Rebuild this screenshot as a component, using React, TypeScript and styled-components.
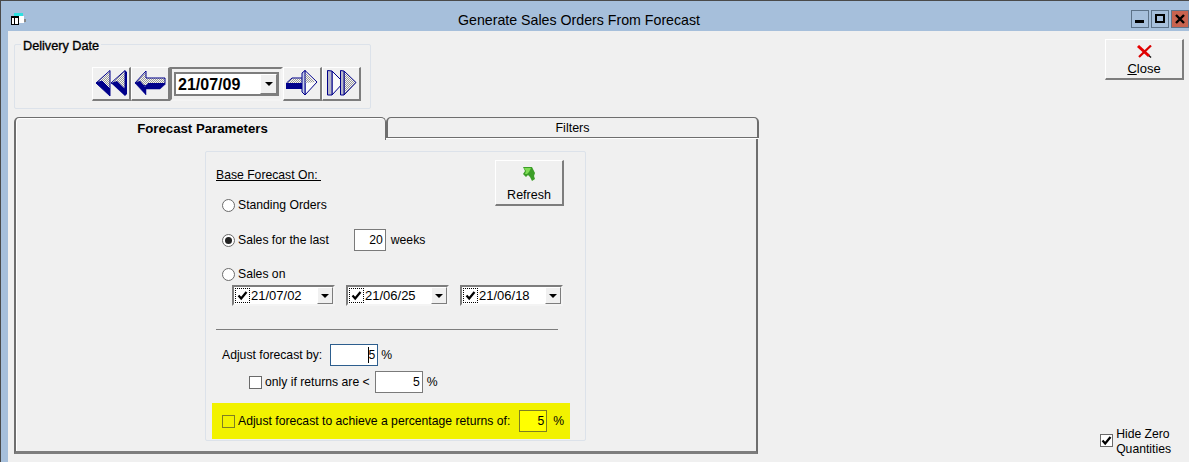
import React from 'react';
import styled, { createGlobalStyle } from 'styled-components';

const Global = createGlobalStyle`
	html, body {
		margin: 0;
		padding: 0;
		background: #f0f0f0;
	}
	body {
		font-family: 'Liberation Sans', Arial, sans-serif;
		font-size: 12.2px;
		color: #000;
	}
`;

const Win = styled.div`
	width: 1189px;
	height: 462px;
	box-sizing: border-box;
	display: flex;
	flex-direction: column;
	background: #a6bfdb;
	border-top: 1px solid #4a4a4a;
	border-left: 1px solid #4a4a4a;
	overflow: hidden;
`;

const TitleBar = styled.div`
	height: 30px;
	flex: none;
	display: flex;
	align-items: flex-start;
	padding: 12px 0 0 10px;
	box-sizing: border-box;
	position: relative;
`;

const Title = styled.div`
	position: absolute;
	left: 0;
	right: 32px;
	top: 11px;
	text-align: center;
	font-size: 14.2px;
	line-height: 16px;
`;

const CtlGroup = styled.div`
	position: absolute;
	right: 0;
	top: 9px;
	display: flex;
	gap: 2px;
`;

const Ctl = styled.div<{ $close?: boolean }>`
	width: 16px;
	height: 16px;
	border: 1px solid #5d7288;
	background: ${(p) => (p.$close ? '#c8634f' : '#a6bfdb')};
	display: flex;
	align-items: center;
	justify-content: center;
`;

const Client = styled.div`
	flex: 1;
	margin-left: 7px;
	background: #f0f0f0;
	display: flex;
	justify-content: space-between;
`;

const LeftCol = styled.div`
	width: 750px;
	padding: 13px 0 0 6px;
	display: flex;
	flex-direction: column;
	align-items: flex-start;
`;

const RightCol = styled.div`
	width: 90px;
	display: flex;
	flex-direction: column;
	align-items: flex-end;
	justify-content: space-between;
	padding: 8px 5px 5px 0;
	box-sizing: border-box;
`;

const DeliveryGroup = styled.div`
	width: 357px;
	height: 65px;
	box-sizing: border-box;
	padding: 22px 0 0 77px;
	border: 1px solid #dce2ea;
	border-radius: 2px;
	display: flex;
	align-items: flex-start;
	position: relative;
`;

const GroupLabel = styled.div`
	position: absolute;
	left: 6px;
	top: -6px;
	padding: 0 2px;
	background: #f0f0f0;
	font-size: 12.7px;
	-webkit-text-stroke: 0.35px #000;
	line-height: 14px;
`;

const NavRow = styled.div`
	display: flex;
	align-items: center;
`;

const RaisedBtn = styled.div`
	box-sizing: border-box;
	display: flex;
	flex-direction: column;
	align-items: center;
	background: #f0f0f0;
	border-top: 1px solid #fff;
	border-left: 1px solid #fff;
	border-right: 2px solid #7d7d7d;
	border-bottom: 2px solid #7d7d7d;
`;

const NavBtn = styled(RaisedBtn)`
	width: 39px;
	height: 34px;
	justify-content: center;
`;

const DateFrame = styled.div`
	width: 113px;
	height: 34px;
	box-sizing: border-box;
	border: 2px solid #7d7d7d;
	border-right-color: #f4f4f4;
	border-bottom-color: #f4f4f4;
	display: flex;
	align-items: center;
	justify-content: center;
`;

const DateCombo = styled.div`
	width: 105px;
	height: 24px;
	box-sizing: border-box;
	background: #fff;
	border: 2px solid #7d7d7d;
	display: flex;
	align-items: center;
	justify-content: space-between;
	font-size: 16px;
	font-weight: bold;
	padding: 1px 0 0 2px;
`;

const DropBtn = styled.div<{ $w: number; $h: number }>`
	width: ${(p) => p.$w}px;
	height: ${(p) => p.$h}px;
	box-sizing: border-box;
	flex: none;
	background: #f0f0f0;
	border-top: 1px solid #fff;
	border-left: 1px solid #fff;
	border-right: 1px solid #7d7d7d;
	border-bottom: 1px solid #7d7d7d;
	display: flex;
	align-items: center;
	justify-content: center;
	&::after {
		content: '';
		border-left: 4px solid transparent;
		border-right: 4px solid transparent;
		border-top: 4px solid #000;
	}
`;

const ComboDrop = styled(DropBtn)`
	align-self: flex-start;
	margin-top: -1px;
`;

const TabStrip = styled.div`
	display: flex;
	height: 23px;
	margin-top: 8px;
	align-items: flex-start;
	position: relative;
	z-index: 1;
`;

const ActiveTab = styled.div`
	box-sizing: border-box;
	width: 372px;
	height: 23px;
	border: 2px solid #6e6e6e;
	border-top-width: 1px;
	border-right-width: 1px;
	border-bottom: none;
	border-radius: 5px 5px 0 0;
	background: #f0f0f0;
	box-shadow: inset 1px 1px 0 #fff;
	text-align: center;
	line-height: 18px;
	padding: 2px 0 0 4px;
	font-weight: bold;
	font-size: 13.2px;
`;

const Tab = styled.div`
	box-sizing: border-box;
	width: 373px;
	height: 21px;
	border: 1px solid #6e6e6e;
	border-left-width: 2px;
	border-right-width: 2px;
	border-radius: 5px 5px 0 0;
	background: #f0f0f0;
	box-shadow: 0 1px 0 #fff;
	text-align: center;
	line-height: 18px;
	padding-top: 1px;
	font-size: 12.5px;
`;

const TabPanel = styled.div`
	width: 744px;
	height: 317px;
	box-sizing: border-box;
	margin-top: -3px;
	border-left: 2px solid #6e6e6e;
	border-right: 2px solid #6e6e6e;
	border-bottom: 3px solid #7d7d7d;
	box-shadow: inset 1px 0 0 #fff;
	padding: 14px 0 0 189px;
`;

const ParamBox = styled.div`
	width: 381px;
	height: 290px;
	box-sizing: border-box;
	border: 1px solid #dce2ea;
	border-radius: 2px;
	display: flex;
	flex-direction: column;
	position: relative;
`;

const BaseLabel = styled.div`
	position: absolute;
	left: 10px;
	top: 16px;
	text-decoration: underline;
	line-height: 15px;
`;

const RefreshBtn = styled(RaisedBtn)`
	position: absolute;
	left: 289px;
	top: 8px;
	width: 69px;
	height: 46px;
	padding-top: 5px;
	gap: 7px;
	line-height: 14px;
	font-size: 12.5px;
`;

const RadioList = styled.div`
	padding: 44px 0 0 16px;
	display: flex;
	flex-direction: column;
`;

const Row = styled.div<{ $h?: number; $mt?: number }>`
	display: flex;
	align-items: center;
	height: ${(p) => p.$h ?? 20}px;
	margin-top: ${(p) => p.$mt ?? 0}px;
`;

const Radio = styled.span<{ $on?: boolean }>`
	width: 13px;
	height: 13px;
	box-sizing: border-box;
	border-radius: 50%;
	border: 1px solid #6a6a6a;
	background: #fff;
	margin-right: 3px;
	display: flex;
	align-items: center;
	justify-content: center;
	&::after {
		content: '';
		display: ${(p) => (p.$on ? 'block' : 'none')};
		width: 7px;
		height: 7px;
		border-radius: 50%;
		background: #222;
	}
`;

const NumField = styled.div<{ $w: number; $ml: number; $mr: number; $focus?: boolean; $yellow?: boolean }>`
	width: ${(p) => p.$w}px;
	height: 22px;
	margin: 0 ${(p) => p.$mr}px 0 ${(p) => p.$ml}px;
	box-sizing: border-box;
	padding-right: 2px;
	text-align: right;
	line-height: 20px;
	background: ${(p) => (p.$yellow ? '#ffff00' : '#fff')};
	border: 1px solid ${(p) => (p.$focus ? '#2d5e8e' : p.$yellow ? '#7f7f22' : '#7a7a7a')};
	position: relative;
`;

const Caret = styled.span`
	position: absolute;
	right: 8px;
	top: 2px;
	width: 1px;
	height: 16px;
	background: #000;
`;

const DateRow = styled.div`
	display: flex;
	gap: 11px;
	padding-left: 10px;
	margin-top: 2px;
`;

const DatePick = styled.div`
	width: 103px;
	height: 21px;
	box-sizing: border-box;
	background: #fff;
	border: 2px solid #7d7d7d;
	border-right-color: #f4f4f4;
	border-bottom-color: #f4f4f4;
	display: flex;
	align-items: center;
	font-size: 13px;
`;

const FocusCheck = styled.span`
	width: 15px;
	height: 15px;
	box-sizing: border-box;
	outline: 1px dotted #000;
	outline-offset: -1px;
	margin: 0 1px 0 1px;
	flex: none;
	display: flex;
	align-items: center;
	justify-content: center;
`;

const DateText = styled.span`
	flex: 1;
`;

const Rule = styled.div`
	height: 1px;
	background: #7d7d7d;
	margin: 23px 27px 0 10px;
`;

const AdjustBlock = styled.div`
	padding: 14px 0 0 16px;
	display: flex;
	flex-direction: column;
	gap: 5px;
`;

const CheckBox = styled.span<{ $yellow?: boolean; $mr?: number }>`
	width: 13px;
	height: 13px;
	box-sizing: border-box;
	margin-right: ${(p) => p.$mr ?? 0}px;
	border: 1px solid ${(p) => (p.$yellow ? '#7f7f22' : '#6a6a6a')};
	background: ${(p) => (p.$yellow ? '#f2f200' : '#fff')};
	flex: none;
	display: flex;
	align-items: center;
	justify-content: center;
`;

const SubRow = styled(Row)`
	padding-left: 27px;
`;

const Highlight = styled.div`
	background: #f2f200;
	margin: 10px 0 0 6px;
	width: 358px;
	height: 36px;
	padding: 0 0 0 10px;
	box-sizing: border-box;
	display: flex;
	align-items: center;
`;

const CloseBtn = styled(RaisedBtn)`
	width: 79px;
	height: 41px;
	padding-top: 5px;
	gap: 4px;
	line-height: 14px;
	font-size: 13px;
`;

const HideZero = styled.div`
	display: flex;
	align-items: center;
	gap: 3px;
	line-height: 15px;
	margin-right: 13px;
`;

const HideCheck = styled(CheckBox)`
	margin-top: -3px;
`;

const Tick = ({ size = 11 }: { size?: number }) => (
	<svg width={size} height={size} viewBox="0 0 11 11">
		<path d="M1.5 5.5 L4.2 8.5 L9.5 2" fill="none" stroke="#000" strokeWidth="2.2" />
	</svg>
);

const NAVY = '#00008b';

// the old toolbar bitmaps use a checker dither on the arrow faces
const Dither = ({ id }: { id: string }) => (
	<defs>
		<pattern id={id} width="2" height="2" patternUnits="userSpaceOnUse">
			<rect width="2" height="2" fill="#f4f4f4" />
			<rect width="1" height="1" fill="#9a9a9a" />
			<rect x="1" y="1" width="1" height="1" fill="#9a9a9a" />
		</pattern>
	</defs>
);

const RewindIcon = () => (
	<svg width="32" height="28" viewBox="0 0 32 28">
		<Dither id="dRew" />
		<path d="M1 13 L15 0.5 L15 19 Z" fill="url(#dRew)" stroke={NAVY} />
		<path d="M1 13 L15 26 L15 19 L7 11 Z" fill={NAVY} stroke={NAVY} />
		<path d="M16 13 L30 0.5 L30 19 Z" fill="url(#dRew)" stroke={NAVY} />
		<path d="M16 13 L30 26 L32 24 L32 2 L30 0.5 L30 19 L22 11 Z" fill={NAVY} />
	</svg>
);

const BackIcon = () => (
	<svg width="32" height="28" viewBox="0 0 32 28">
		<Dither id="dBack" />
		<path d="M1 13 L12 1 L12 8 L31 8 L31 13.5 L14 13.5 L12 16 Z" fill="url(#dBack)" stroke={NAVY} />
		<path d="M1 13 L12 25 L12 19 L26 19 L31.5 14 L14 14 L11 17 L6 11 Z" fill={NAVY} stroke={NAVY} strokeWidth="0.5" />
	</svg>
);

const ForwardIcon = () => (
	<svg width="32" height="28" viewBox="0 0 32 28">
		<Dither id="dFwd" />
		<path d="M19 0.5 L31 12 L19 25 Z" fill="#fafafa" stroke={NAVY} />
		<path d="M6 8.5 L19 8.5 L19 2 L29.5 12 L19 13 L1 13 Z" fill="url(#dFwd)" />
		<path d="M0.5 13 L6 8 L16 8" fill="none" stroke={NAVY} />
		<path d="M0 13 L16 13 L16 19 L0 19 Z" fill={NAVY} />
		<path d="M16 3 L19 0.5 L19 25 L16 22 Z" fill="#c7cfe8" stroke={NAVY} />
	</svg>
);

const FastForwardIcon = () => (
	<svg width="32" height="28" viewBox="0 0 32 28">
		<Dither id="dFf" />
		<path d="M7 1 L18.5 12.5 L7 25 Z" fill="#fafafa" stroke={NAVY} />
		<path d="M2.5 0.5 L7 1 L7 25 L2.5 25 Z" fill="#b9b9c9" stroke={NAVY} />
		<path d="M19 1 L31 12.5 L19 25 Z" fill="url(#dFf)" stroke={NAVY} />
		<path d="M15.5 0.5 L19 1 L19 25 L15.5 25 Z" fill="#b9b9c9" stroke={NAVY} />
	</svg>
);

const AppIcon = () => (
	<svg width="16" height="13" viewBox="0 0 16 13" shapeRendering="crispEdges">
		<rect x="3" y="0" width="9" height="3" fill="#2fe0e0" />
		<rect x="6" y="3" width="7" height="7" fill="#fff" />
		<rect x="13" y="6" width="2" height="3" fill="#888" />
		<rect x="0.5" y="3.5" width="7" height="8" fill="#fff" stroke="#000" />
		<rect x="0" y="3" width="8" height="2" fill="#000" />
		<rect x="3" y="5" width="1" height="7" fill="#000" />
	</svg>
);

const RedX = () => (
	<svg width="15" height="13" viewBox="0 0 15 13">
		<path d="M8 7 L14 12.5" stroke="#111" strokeWidth="1.4" fill="none" />
		<path d="M1 1 L12 11" stroke="#e80000" strokeWidth="3" fill="none" />
		<path d="M14 0.5 L2 12" stroke="#d80000" strokeWidth="2.2" fill="none" />
	</svg>
);

const RefreshIcon = () => (
	<svg width="13" height="15" viewBox="0 0 13 15">
		<path d="M0 1 L9 1 L12 7 L11 10 L12 13 L9 15 L7 11 L5 9 L3 11 L0 8 L2 5 Z" fill="#3c9e28" />
		<path d="M1 2 L8 2 L6 6 L4 8 L2 8 L3 5 Z" fill="#7fdc55" />
	</svg>
);

function DateCheck({ text }: { text: string }) {
	return (
		<DatePick>
			<FocusCheck>
				<Tick />
			</FocusCheck>
			<DateText>{text}</DateText>
			<DropBtn $w={16} $h={17} />
		</DatePick>
	);
}

export default function App() {
	return (
		<Win>
			<Global />
			<TitleBar>
				<AppIcon />
				<Title>Generate Sales Orders From Forecast</Title>
				<CtlGroup>
					<Ctl>
						<svg width="10" height="10" viewBox="0 0 10 10">
							<rect x="0" y="6" width="9" height="3" fill="#000" />
						</svg>
					</Ctl>
					<Ctl>
						<svg width="10" height="10" viewBox="0 0 10 10">
							<rect x="1" y="1" width="8" height="7" fill="none" stroke="#000" strokeWidth="2" />
						</svg>
					</Ctl>
					<Ctl $close>
						<svg width="10" height="10" viewBox="0 0 10 10">
							<path d="M1 1 L9 9 M9 1 L1 9" stroke="#000" strokeWidth="2.4" />
						</svg>
					</Ctl>
				</CtlGroup>
			</TitleBar>
			<Client>
				<LeftCol>
					<DeliveryGroup>
						<GroupLabel>Delivery Date</GroupLabel>
						<NavRow>
							<NavBtn>
								<RewindIcon />
							</NavBtn>
							<NavBtn>
								<BackIcon />
							</NavBtn>
							<DateFrame>
								<DateCombo>
									21/07/09
									<ComboDrop $w={17} $h={20} />
								</DateCombo>
							</DateFrame>
							<NavBtn>
								<ForwardIcon />
							</NavBtn>
							<NavBtn>
								<FastForwardIcon />
							</NavBtn>
						</NavRow>
					</DeliveryGroup>
					<TabStrip>
						<ActiveTab>Forecast Parameters</ActiveTab>
						<Tab>Filters</Tab>
					</TabStrip>
					<TabPanel>
						<ParamBox>
							<BaseLabel>Base Forecast On:&nbsp;</BaseLabel>
							<RefreshBtn>
								<RefreshIcon />
								Refresh
							</RefreshBtn>
							<RadioList>
								<Row $h={18}>
									<Radio />
									Standing Orders
								</Row>
								<Row $h={24} $mt={14}>
									<Radio $on />
									Sales for the last
									<NumField $w={32} $ml={25} $mr={5}>
										20
									</NumField>
									weeks
								</Row>
								<Row $h={18} $mt={13}>
									<Radio />
									Sales on
								</Row>
								<DateRow>
									<DateCheck text="21/07/02" />
									<DateCheck text="21/06/25" />
									<DateCheck text="21/06/18" />
								</DateRow>
							</RadioList>
							<Rule />
							<AdjustBlock>
								<Row $h={22}>
									Adjust forecast by:
									<NumField $w={48} $ml={8} $mr={3} $focus>
										5<Caret />
									</NumField>
									%
								</Row>
								<SubRow $h={22}>
									<CheckBox $mr={3} />
									only if returns are &lt;
									<NumField $w={48} $ml={5} $mr={4}>
										5
									</NumField>
									%
								</SubRow>
							</AdjustBlock>
							<Highlight>
								<CheckBox $yellow $mr={3} />
								Adjust forecast to achieve a percentage returns of:
								<NumField $w={28} $ml={9} $mr={6} $yellow>
									5
								</NumField>
								%
							</Highlight>
						</ParamBox>
					</TabPanel>
				</LeftCol>
				<RightCol>
					<CloseBtn>
						<RedX />
						<span>
							<u>C</u>lose
						</span>
					</CloseBtn>
					<HideZero>
						<HideCheck>
							<Tick />
						</HideCheck>
						<span>
							Hide Zero
							<br />
							Quantities
						</span>
					</HideZero>
				</RightCol>
			</Client>
		</Win>
	);
}
